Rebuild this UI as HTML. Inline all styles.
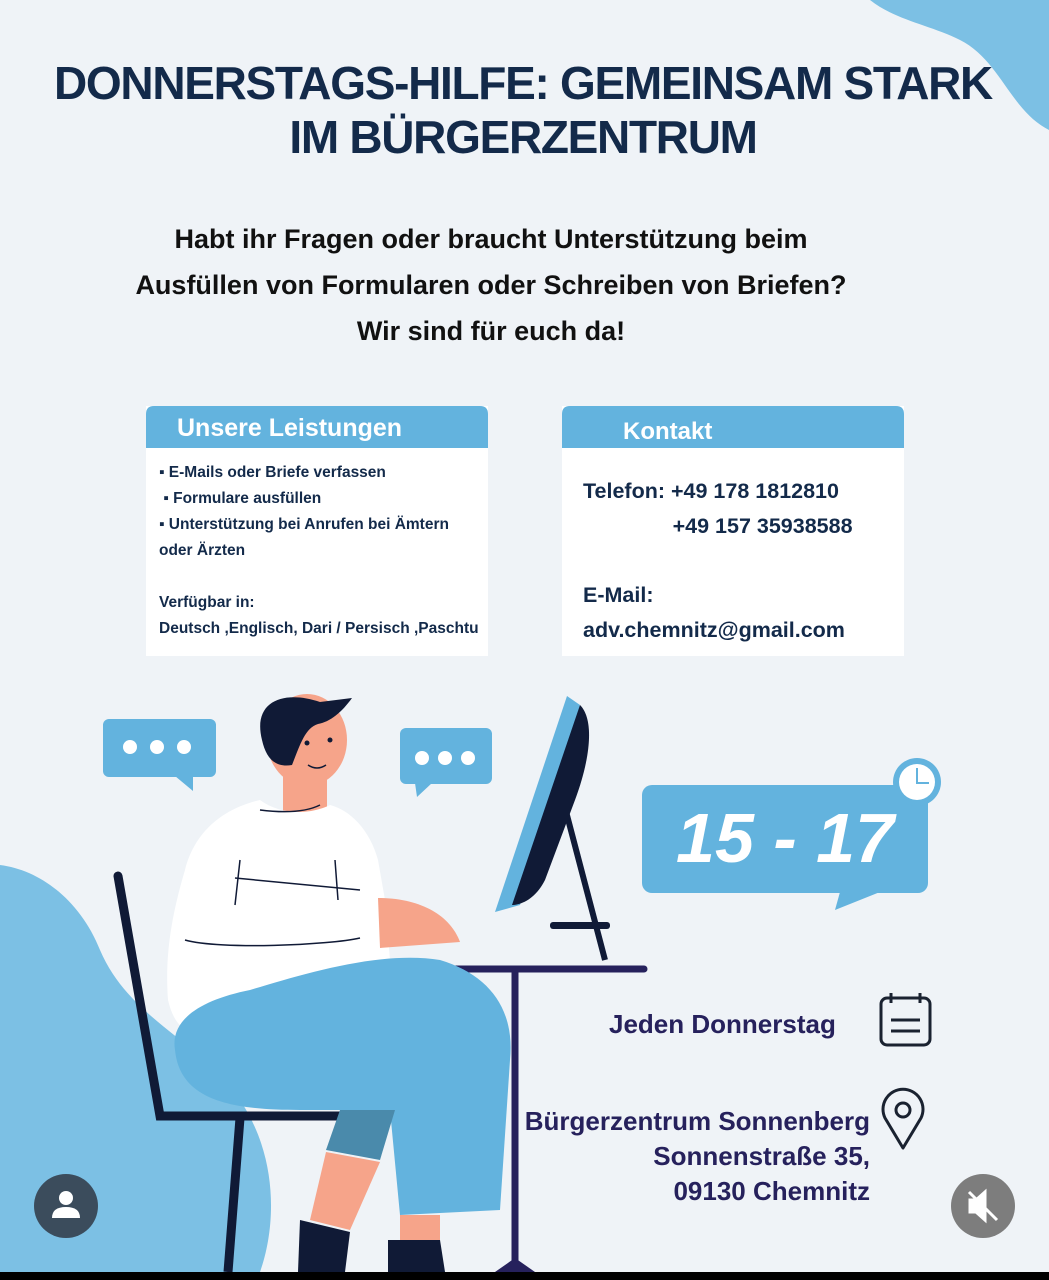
<!DOCTYPE html>
<html><head><meta charset="utf-8"><style>
html,body{margin:0;padding:0}
body{width:1049px;height:1280px;position:relative;overflow:hidden;background:#eff3f7;font-family:"Liberation Sans",sans-serif}
.t{position:absolute;white-space:nowrap;font-weight:bold}
svg{position:absolute;left:0;top:0}
</style></head><body>
<svg width="1049" height="1280" viewBox="0 0 1049 1280">
<path d="M870 0 L1049 0 L1049 130 C1010 110 1000 60 960 40 C930 25 895 20 870 0Z" fill="#7cc0e4"/>
<path d="M0 865 C40 870 80 900 100 950 C130 1020 200 1040 240 1100 C280 1160 275 1230 260 1272 L0 1272Z" fill="#7cc0e4"/>
<rect x="146" y="406" width="342" height="250" fill="#fff"/>
<path d="M146 448 V414 Q146 406 154 406 H480 Q488 406 488 414 V448Z" fill="#63b3de"/>
<rect x="562" y="406" width="342" height="250" fill="#fff"/>
<path d="M562 448 V414 Q562 406 570 406 H896 Q904 406 904 414 V448Z" fill="#63b3de"/>
<rect x="103" y="719" width="113" height="58" rx="6" fill="#63b3de"/>
<path d="M175 776 L193 791 L193 776Z" fill="#63b3de"/>
<circle cx="130" cy="747" r="7" fill="#fff"/><circle cx="157" cy="747" r="7" fill="#fff"/><circle cx="184" cy="747" r="7" fill="#fff"/>
<rect x="400" y="728" width="92" height="56" rx="6" fill="#63b3de"/>
<path d="M415 783 L417 797 L432 783Z" fill="#63b3de"/>
<circle cx="422" cy="758" r="7" fill="#fff"/><circle cx="445" cy="758" r="7" fill="#fff"/><circle cx="468" cy="758" r="7" fill="#fff"/>
<rect x="642" y="785" width="286" height="108" rx="10" fill="#63b3de"/>
<path d="M840 892 L835 910 L880 892Z" fill="#63b3de"/>
<circle cx="917" cy="782" r="24" fill="#63b3de"/><circle cx="917" cy="782" r="18" fill="#fff"/>
<path d="M917 768 V783 H929" stroke="#63b3de" stroke-width="2" fill="none"/>
<path d="M118 876 L160 1116 L360 1116" stroke="#101a36" stroke-width="9" fill="none" stroke-linecap="round"/>
<path d="M240 1118 L228 1272" stroke="#101a36" stroke-width="9"/>
<path d="M372 969 H644" stroke="#26215c" stroke-width="7" stroke-linecap="round"/>
<path d="M515 969 V1270" stroke="#26215c" stroke-width="7"/>
<path d="M495 1272 L515 1258 L535 1272Z" fill="#26215c"/>
<path d="M567 696 L580 705 L520 905 L495 912Z" fill="#63b3de"/>
<path d="M580 705 C595 720 590 760 575 800 L545 880 C535 900 520 905 512 905Z" fill="#101a36"/>
<path d="M563 800 L605 960" stroke="#101a36" stroke-width="6"/>
<rect x="550" y="922" width="60" height="7" rx="3" fill="#101a36"/>
<rect x="283" y="770" width="44" height="50" fill="#f6a48a"/>
<ellipse cx="307" cy="740" rx="40" ry="46" fill="#f6a48a"/>
<path d="M262 740 C252 700 285 690 320 702 L352 698 C342 712 330 722 318 724 C305 728 300 745 292 765 C275 768 266 758 262 740Z" fill="#101a36"/>
<circle cx="307" cy="743" r="2.5" fill="#101a36"/><circle cx="330" cy="740" r="2.5" fill="#101a36"/>
<path d="M308 765 Q317 771 326 765" stroke="#101a36" stroke-width="1.5" fill="none"/>
<path d="M260 800 C225 808 195 830 185 870 C170 920 165 960 168 1000 C175 1030 190 1040 230 1030 L360 990 L390 960 L385 900 L378 860 C370 830 350 810 330 805 C310 815 280 815 260 800Z" fill="#fff"/>
<path d="M260 810 Q300 815 320 805" stroke="#101a36" stroke-width="1.5" fill="none"/>
<path d="M240 860 L235 905 M335 860 L338 900" stroke="#101a36" stroke-width="1.5"/>
<path d="M235 878 L360 890" stroke="#101a36" stroke-width="1.5"/>
<path d="M185 940 C220 950 330 945 360 938" stroke="#101a36" stroke-width="1.5" fill="none"/>
<path d="M378 898 C420 898 450 915 460 942 L380 948Z" fill="#f6a48a"/>
<path d="M175 1050 C170 1020 200 1000 250 990 C300 975 380 950 440 960 C490 975 515 1010 510 1060 L500 1210 L400 1215 L390 1110 L300 1110 C230 1110 180 1100 175 1050Z" fill="#63b3de"/>
<path d="M340 1110 L395 1110 L380 1160 L326 1150Z" fill="#4a8aab"/>
<path d="M326 1152 L380 1162 L350 1230 L310 1220Z" fill="#f6a48a"/>
<path d="M400 1215 L440 1215 L440 1240 L400 1240Z" fill="#f6a48a"/>
<path d="M300 1220 L350 1232 L345 1272 L298 1272Z" fill="#101a36"/>
<path d="M388 1240 L440 1240 L445 1272 L388 1272Z" fill="#101a36"/>
<rect x="881" y="998" width="49" height="47" rx="6" fill="none" stroke="#1a2230" stroke-width="3"/>
<path d="M891 993 V1003 M920 993 V1003 M891 1020 H920 M891 1031 H920" stroke="#1a2230" stroke-width="3"/>
<path d="M903 1148 L885 1118 A20 20 0 1 1 921 1118Z" fill="none" stroke="#1a2230" stroke-width="3" stroke-linejoin="round"/>
<circle cx="903" cy="1110" r="7" fill="none" stroke="#1a2230" stroke-width="3"/>
<circle cx="66" cy="1206" r="32" fill="#3b4c5c"/>
<circle cx="66" cy="1198" r="7" fill="#fff"/><path d="M52 1218 Q52 1207 66 1207 Q80 1207 80 1218Z" fill="#fff"/>
<circle cx="983" cy="1206" r="32" fill="#7d7d7d"/>
<path d="M970 1200 H976 L985 1192 V1220 L976 1212 H970Z M969 1192 L997 1220" stroke="#fff" stroke-width="3" fill="#fff"/>
<rect x="0" y="1272" width="1049" height="8" fill="#000"/>
</svg>
<div class="t" style="left:48px;top:56px;width:950px;text-align:center;font-size:46px;line-height:54px;color:#132a4a;letter-spacing:-1.3px">DONNERSTAGS-HILFE: GEMEINSAM STARK<br>IM BÜRGERZENTRUM</div>
<div class="t" style="left:0;top:216px;width:982px;text-align:center;font-size:27px;line-height:46px;color:#111">Habt ihr Fragen oder braucht Unterstützung beim<br>Ausfüllen von Formularen oder Schreiben von Briefen?<br>Wir sind für euch da!</div>
<div class="t" style="left:177px;top:414px;font-size:25px;color:#fff">Unsere Leistungen</div>
<div class="t" style="left:623px;top:418px;font-size:24px;color:#fff">Kontakt</div>
<div class="t" style="left:159px;top:460px;font-size:15.5px;line-height:26px;color:#132a4a">▪ E-Mails oder Briefe verfassen<br>&nbsp;▪ Formulare ausfüllen<br>▪ Unterstützung bei Anrufen bei Ämtern<br>oder Ärzten<br><br>Verfügbar in:<br>Deutsch ,Englisch, Dari / Persisch ,Paschtu</div>
<div class="t" style="left:583px;top:474px;font-size:21.5px;line-height:35px;color:#132a4a">Telefon: +49 178 1812810<br>&nbsp;&nbsp;&nbsp;&nbsp;&nbsp;&nbsp;&nbsp;&nbsp;&nbsp;&nbsp;&nbsp;&nbsp;&nbsp;&nbsp;&nbsp;+49 157 35938588</div>
<div class="t" style="left:583px;top:578px;font-size:21.5px;line-height:35px;color:#132a4a">E-Mail:<br>adv.chemnitz@gmail.com</div>
<div class="t" style="left:642px;top:798px;width:286px;text-align:center;font-size:70px;font-style:italic;color:#fff">15 - 17</div>
<div class="t" style="left:609px;top:1009px;font-size:26px;color:#26215c">Jeden Donnerstag</div>
<div class="t" style="left:500px;top:1104px;width:370px;text-align:right;font-size:26px;line-height:35px;color:#26215c">Bürgerzentrum Sonnenberg<br>Sonnenstraße 35,<br>09130 Chemnitz</div>
</body></html>
